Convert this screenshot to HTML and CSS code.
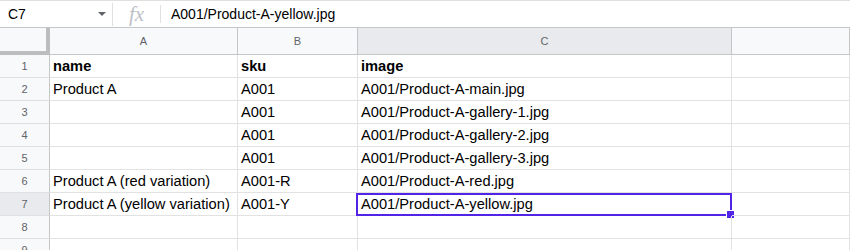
FILE: index.html
```html
<!DOCTYPE html>
<html lang="en">
<head>
  <meta charset="UTF-8" />
  <title>Sheet</title>
  <link rel="stylesheet" href="styles.css">
</head>
<body>

  <!-- formula bar -->
  <div class="formula-bar">
    <div class="namebox"><span>C7</span><i class="caret"></i></div>
    <div class="sep"></div>
    <div class="fx">fx</div>
    <div class="sep short"></div>
    <div class="formula">A001/Product-A-yellow.jpg</div>
  </div>

  <!-- grid -->
  <div class="sheet">
    <div class="corner"></div>
    <div class="colhead">A</div>
    <div class="colhead">B</div>
    <div class="colhead sel">C</div>
    <div class="colhead"></div>

    <div class="rowhead">1</div>
    <div class="cell bold">name</div>
    <div class="cell bold">sku</div>
    <div class="cell bold">image</div>
    <div class="cell"></div>

    <div class="rowhead">2</div>
    <div class="cell">Product A</div>
    <div class="cell">A001</div>
    <div class="cell">A001/Product-A-main.jpg</div>
    <div class="cell"></div>

    <div class="rowhead">3</div>
    <div class="cell"></div>
    <div class="cell">A001</div>
    <div class="cell">A001/Product-A-gallery-1.jpg</div>
    <div class="cell"></div>

    <div class="rowhead">4</div>
    <div class="cell"></div>
    <div class="cell">A001</div>
    <div class="cell">A001/Product-A-gallery-2.jpg</div>
    <div class="cell"></div>

    <div class="rowhead">5</div>
    <div class="cell"></div>
    <div class="cell">A001</div>
    <div class="cell">A001/Product-A-gallery-3.jpg</div>
    <div class="cell"></div>

    <div class="rowhead">6</div>
    <div class="cell">Product A (red variation)</div>
    <div class="cell">A001-R</div>
    <div class="cell">A001/Product-A-red.jpg</div>
    <div class="cell"></div>

    <div class="rowhead sel">7</div>
    <div class="cell">Product A (yellow variation)</div>
    <div class="cell">A001-Y</div>
    <div class="cell active">A001/Product-A-yellow.jpg<span class="box"></span><span class="handle"></span></div>
    <div class="cell"></div>

    <div class="rowhead">8</div>
    <div class="cell"></div>
    <div class="cell"></div>
    <div class="cell"></div>
    <div class="cell"></div>

    <div class="rowhead">9</div>
    <div class="cell"></div>
    <div class="cell"></div>
    <div class="cell"></div>
    <div class="cell"></div>
  </div>

</body>
</html>
```

FILE: styles.css
```css
*{box-sizing:border-box;margin:0;padding:0}
body{font-family:"Liberation Sans",Arial,sans-serif;background:#fff;color:#000;
     width:850px;height:250px;overflow:hidden}

/* formula bar */
.formula-bar{display:flex;align-items:center;height:28px;border-top:1px solid #e0e0e0;
             border-bottom:1px solid #c4c7c5;font-size:14px}
.namebox{width:112px;display:flex;align-items:center;justify-content:space-between;
         padding:0 6px 0 8px;color:#000}
.caret{width:0;height:0;border-left:4px solid transparent;border-right:4px solid transparent;
       border-top:4px solid #5f6368}
.sep{width:1px;height:23px;background:#e0e0e0}
.sep.short{height:18px}
.fx{width:47px;text-align:center;font-family:"Liberation Serif",serif;font-style:italic;
    font-size:21px;color:#bdc1c6;line-height:24px}
.formula{padding-left:10px;color:#000}

/* grid */
.sheet{display:grid;grid-template-columns:50px 188px 120px 374px 1fr;
       grid-template-rows:27px repeat(9,23px)}
.corner{background:#f8f9fa;border-right:4px solid #bdbdbd;border-bottom:4px solid #bdbdbd}
.colhead{background:#f8f9fa;border-right:1px solid #c4c7c5;border-bottom:1px solid #c4c7c5;
         font-size:11px;color:#5f6368;text-align:center;line-height:26px}
.colhead:last-child{border-right:none}
.rowhead{background:#f8f9fa;border-right:1px solid #c4c7c5;border-bottom:1px solid #e0e0e0;
         font-size:11px;color:#5f6368;text-align:center;line-height:22px}
.sel{background:#e8eaed}
.cell{border-right:1px solid #e2e2e2;border-bottom:1px solid #e2e2e2;font-size:14.67px;
      padding:1px 3px 0;line-height:21px;white-space:nowrap;position:relative}
.bold{font-weight:bold}

/* selection */
.active .box{position:absolute;top:0;left:-2px;right:-1px;bottom:-1px;border:2px solid #5124e8}
.active .handle{position:absolute;right:-4px;bottom:-4px;width:9px;height:9px;
                background:#5124e8;border:1px solid #fff}
```
